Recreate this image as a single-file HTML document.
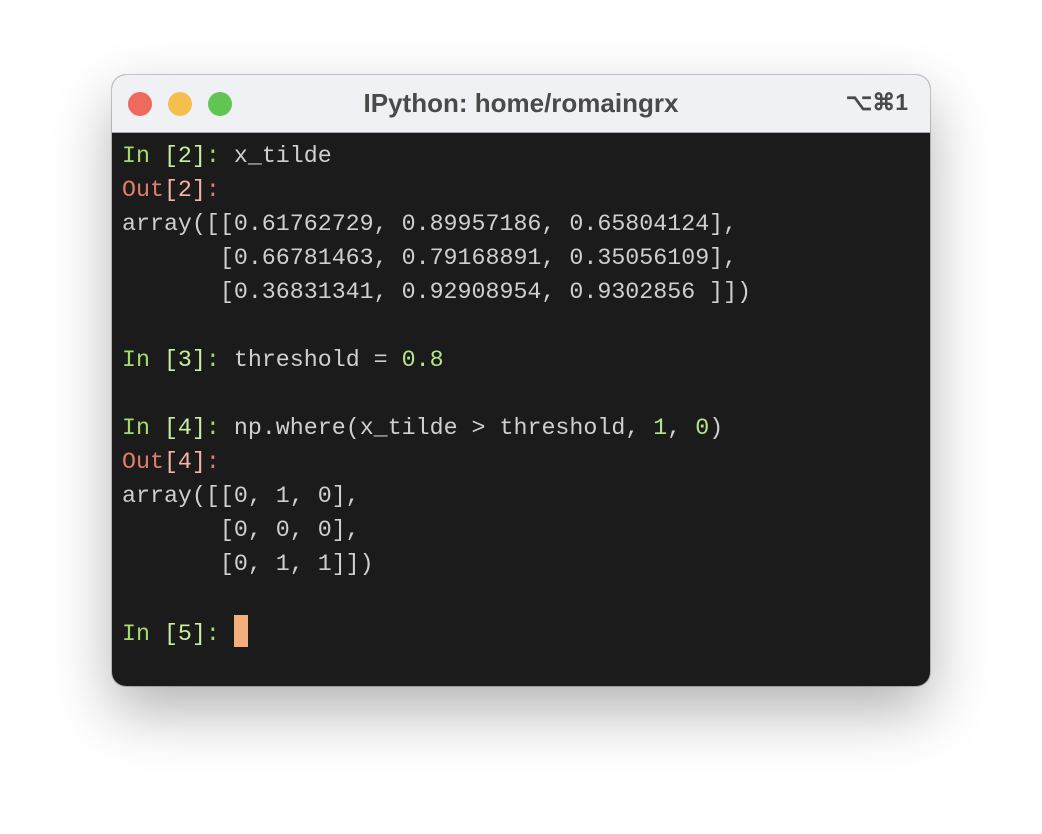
<!DOCTYPE html>
<html><head><style>
body{margin:0;width:1042px;height:834px;background:#fff;position:relative;overflow:hidden;font-family:"Liberation Sans",sans-serif}
.win{position:absolute;left:112px;top:75px;width:818px;height:611px;border-radius:14px;background:#1b1b1b;overflow:hidden;box-shadow:0 25px 60px rgba(0,0,0,.3),0 0 0 1px rgba(0,0,0,.2)}
.tb{height:57px;background:#f0f1f5;border-bottom:1px solid #a8a8a8;position:relative}
.dot{position:absolute;top:17px;width:24px;height:24px;border-radius:50%}
.t{position:absolute;left:0;right:0;top:13px;text-align:center;font-weight:bold;font-size:26px;color:#4a4a4a}
.k{position:absolute;right:22px;top:14px;font-weight:bold;font-size:23px;color:#4a4a4a}
pre{margin:0;position:absolute;left:10px;top:64px;font-family:"Liberation Mono","DejaVu Sans Mono",monospace;font-size:23.3px;line-height:34px;color:#cfcfcf}
.g{color:#a3db6f}.G{color:#c8f0a0}.r{color:#e47c6c}.R{color:#f4b4a8}.n{color:#b6e58a}
.cur{display:inline-block;width:14px;height:32px;background:#f4b07c;vertical-align:-7px}
</style></head><body>
<div class="win">
<div class="tb">
<div class="dot" style="left:16px;background:#ed6a5e"></div>
<div class="dot" style="left:56px;background:#f5bf4f"></div>
<div class="dot" style="left:96px;background:#61c554"></div>
<div class="t">IPython: home/romaingrx</div>
<div class="k">⌥⌘1</div>
</div>
<pre><span class="g">In </span><span class="G">[2]</span><span class="g">:</span> x_tilde
<span class="r">Out</span><span class="R">[2]</span><span class="r">:</span>
array([[0.61762729, 0.89957186, 0.65804124],
       [0.66781463, 0.79168891, 0.35056109],
       [0.36831341, 0.92908954, 0.9302856 ]])

<span class="g">In </span><span class="G">[3]</span><span class="g">:</span> threshold = <span class="n">0.8</span>

<span class="g">In </span><span class="G">[4]</span><span class="g">:</span> np.where(x_tilde &gt; threshold, <span class="n">1</span>, <span class="n">0</span>)
<span class="r">Out</span><span class="R">[4]</span><span class="r">:</span>
array([[0, 1, 0],
       [0, 0, 0],
       [0, 1, 1]])

<span class="g">In </span><span class="G">[5]</span><span class="g">:</span> <span class="cur"></span></pre>
</div>
</body></html>
